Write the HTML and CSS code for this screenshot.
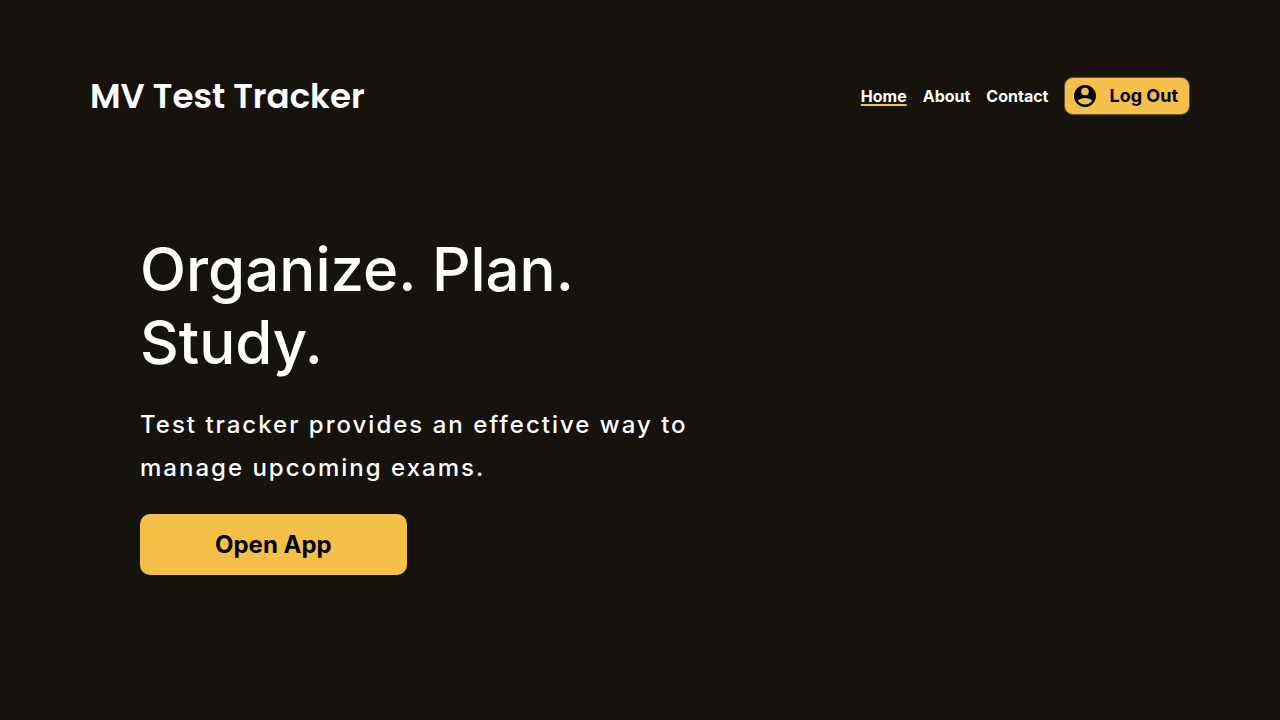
FILE: index.html
```html
<!DOCTYPE html>
<html lang="en">
<head>
<meta charset="utf-8">
<meta name="viewport" content="width=device-width, initial-scale=1">
<title>MV Test Tracker</title>
<link rel="stylesheet" href="styles.css">
</head>
<body>
<header class="header">
  <a class="brand" href="#">MV Test Tracker</a>
  <nav class="nav" aria-label="Main">
    <a class="nav-link active" href="#">Home</a>
    <a class="nav-link" href="#">About</a>
    <a class="nav-link" href="#">Contact</a>
    <button class="logout" type="button">
      <svg class="icon" viewBox="2 2 20 20" aria-hidden="true"><path fill="currentColor" fill-rule="evenodd" d="M12 2a10 10 0 1 0 0 20 10 10 0 0 0 0-20zM12 4.400a3.500 3.500 0 1 1 0 7 3.500 3.500 0 0 1 0-7zM5.400 16.300C6.800 14.700 9.300 13.900 12 13.900s5.200.8 6.600 2.400C17.200 18.400 14.800 19.700 12 19.700s-5.200-1.300-6.600-3.400z"/></svg>
      <span>Log Out</span>
    </button>
  </nav>
</header>
<main class="hero">
  <h1 class="title">Organize. Plan. Study.</h1>
  <p class="lead">Test tracker provides an effective way to manage upcoming exams.</p>
  <button class="open" type="button">Open App</button>
</main>
</body>
</html>
```

FILE: styles.css
```css
* { box-sizing: border-box; }
body {
  margin: 0;
  background: #16130e;
  color: #fff;
  font-family: Inter, "Liberation Sans", sans-serif;
}
.header {
  display: flex;
  align-items: center;
  justify-content: space-between;
  padding: 70px 90px 0;
}
.brand {
  color: inherit;
  font-family: Poppins, Inter, sans-serif;
  font-size: 34px;
  font-weight: 600;
  line-height: 52px;
  text-decoration: none;
}
.nav {
  display: flex;
  align-items: center;
  gap: 16px;
}
.nav-link {
  color: inherit;
  font-size: 16px;
  font-weight: 700;
  line-height: 20px;
  text-decoration: none;
}
.active {
  text-decoration: underline 2px #f5c04a;
  text-underline-offset: 2px;
}
.logout {
  display: flex;
  align-items: center;
  gap: 13px;
  padding: 7px 11px 7px 9px;
  border: 1px solid #675431;
  border-radius: 9px;
  background: #f5c04a;
  color: #000;
  font: 700 18px/22px Inter, sans-serif;
}
.icon {
  width: 22px;
  height: 22px;
}
.hero {
  max-width: 720px;
  padding: 111px 20px 60px 140px;
}
.title {
  max-width: 480px;
  margin: 0;
  font-size: 60px;
  font-weight: 500;
  line-height: 73px;
}
.lead {
  margin: 24px 0 25px;
  font-size: 24px;
  font-weight: 500;
  line-height: 43px;
  letter-spacing: 2px;
}
.open {
  display: block;
  padding: 15px 75px;
  border: 0;
  border-radius: 10px;
  background: #f5c04a;
  color: #000;
  font: 700 24px/31px Inter, sans-serif;
}
```
